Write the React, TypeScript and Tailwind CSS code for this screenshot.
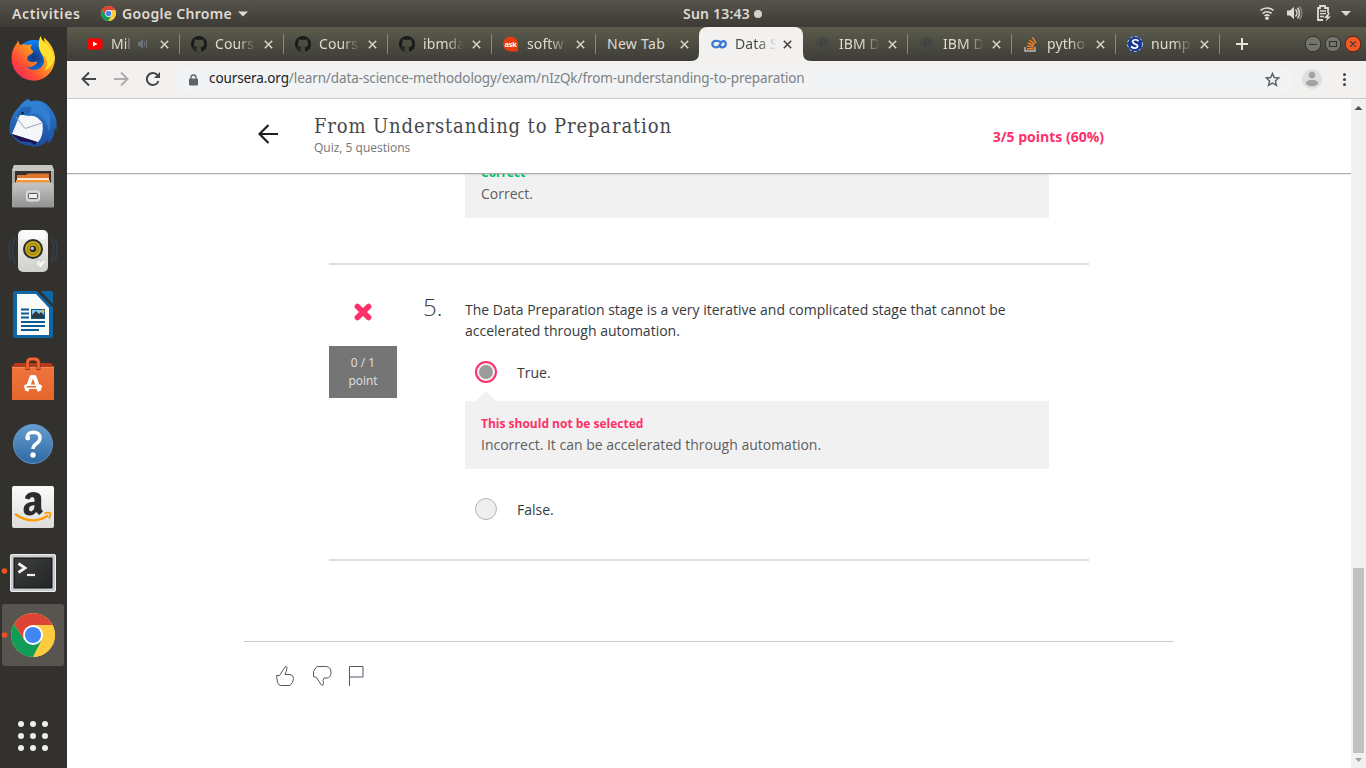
import React from "react";

const UI = "font-['Noto_Sans','Open_Sans',sans-serif]";

function ChromeLogo({ size }: { size: number }) {
  return (
    <svg width={size} height={size} viewBox="0 0 44 44" className="shrink-0">
      <ChromeShape />
    </svg>
  );
}

function ChromeShape() {
  return (
    <g>
      <circle cx="22" cy="22" r="22" fill="#fecb40" />
      <path d="M3 11 A22 22 0 0 0 22 44 L31 27 L22 22 L13.3 27 Z" fill="#109d58" />
      <path d="M22 44 L30.7 27 L32 12 L41.6 12 A22 22 0 0 1 22 44 Z" fill="#fecb40" />
      <path d="M3 11 A22 22 0 0 1 41.4 12 L22 12 L13.3 27 Z" fill="#db4437" />
      <circle cx="22" cy="22" r="10" fill="#fff" />
      <circle cx="22" cy="22" r="8.1" fill="#4285f4" />
    </g>
  );
}

function TopBar() {
  return (
    <div className={`${UI} flex h-[27px] shrink-0 items-center bg-linear-to-b from-[#57534b] to-[#3d3b36] text-[14px] font-semibold text-[#dfdbd2]`}>
      <div className="flex w-[683px] shrink-0 items-center pl-[12px]">
        <span className="w-[89px] whitespace-nowrap tracking-[0.6px]">Activities</span>
        <ChromeLogo size={15} />
        <span className="ml-[6px] w-[111px] whitespace-nowrap tracking-[0.32px]">Google Chrome</span>
        <svg width="10" height="6" viewBox="0 0 10 6" className="ml-[5px]"><path d="M0 .5h10L5 5.5z" fill="#dfdbd2" /></svg>
      </div>
      <div className="flex flex-1 items-center">
        <span className="w-[71px] tracking-[0.2px] whitespace-nowrap">Sun 13:43</span>
        <span className="h-2 w-2 shrink-0 rounded-full bg-[#d4d1ca]" />
      </div>
      <svg width="106" height="27" viewBox="1260 0 106 27" className="shrink-0" fill="none" stroke="#dfdbd2">
        <path d="M1260.5 10.5a9.5 9.5 0 0 1 13 0M1262.5 13.5a6.500 6.500 0 0 1 9 0M1264.5 16a3.600 3.600 0 0 1 5 0" strokeWidth="1.6" />
        <circle cx="1267" cy="18.300" r="1.800" fill="#dfdbd2" stroke="none" />
        <path d="M1287 10.500h3l4-3.700v12.400l-4-3.700h-3z" fill="#dfdbd2" stroke="none" />
        <path d="M1295.500 9.500a5 5 0 0 1 0 7" strokeWidth="1.500" />
        <path d="M1297.500 7.800a8 8 0 0 1 0 10.400" strokeWidth="1.500" />
        <path d="M1299.500 6.500a10 10 0 0 1 0 13" strokeWidth="1.300" opacity=".45" />
        <path d="M1323 20h-5V8h2V6h5v2h3v5" strokeWidth="1.800" />
        <path d="M1320 11h6M1320 13.700h6M1320 16.500h4" strokeWidth="1.300" />
        <path d="M1328.500 13l-4.500 5h3l-1.500 3.500 5.500-5h-3l2-3.500z" fill="#dfdbd2" stroke="none" />
        <path d="M1341 11h10l-5 5z" fill="#dfdbd2" stroke="none" />
      </svg>
    </div>
  );
}

const dockArt: React.ReactNode[] = [
  <g key="firefox">
    <circle cx="34" cy="58" r="18" fill="url(#ffBlue)" />
    <path d="M15.500 45 Q17.500 42.500 18 40.500 L20 45 Q24 43.500 27 45 L32 44.500 Q29 48 32.500 50.500 Q34 51 32 53.500 L28 56 Q26 59 28.500 61 Q31 63 36 61.500 Q38.500 62.500 35 65 Q30 69 25.500 65.500 Q32 73 40.500 68 Q47 62 42 55 Q36 46 40.500 36 Q42 41 45 42 Q43.500 40 44 37.500 Q54 46 55 57 Q55 72 43 78.500 Q33 83.500 22 77.500 Q11 70 11.500 57 Q12 50 15.500 45 Z" fill="url(#ffFire)" />
    <path d="M40.500 36 Q42 41 45 43 Q53 50 54.500 58 Q53 67 44 71 Q51 62 43 55 Q36 47 40.500 36Z" fill="#ffe22d" />
  </g>,
  <g key="mail">
    <path d="M19 107 Q26 97.500 30 99.500 L29 102 Q42 97 51 109 Q58 118 56.500 130 L54.500 128 Q55 137 49 143.500 L47.500 140.500 Q43 146.500 34 146.500 Q17 145.500 11.500 134 L10 135 Q7.500 118 19 107Z" fill="url(#tbBlue)" />
    <path d="M21 105 Q27 99 33 102 Q43 100 49 112 Q52 121 49 133 Q48 123 42 117 Q34 110 28 115 L19 115Z" fill="#2f7fd3" />
    <path d="M20 114.500 L12 134 L38 142 Q44 136 42.500 123 Q36 114 29 116Z" fill="#f5f6fa" />
    <path d="M16 117 L25 128.500 L42 123" fill="none" stroke="#9ca4b0" strokeWidth="1" />
    <path d="M12 134 L37 142 L35 145 Q30 141 26 142 Q17 141 12 134Z" fill="#24124c" />
    <path d="M17 119 Q18 104 31 107 Q33 110 28 115 L20 115Z" fill="#2466b5" />
    <circle cx="22.500" cy="113" r="1.500" fill="#0d274f" />
  </g>,
  <g key="files">
    <path d="M14 165h38l2 5v37H12v-37z" fill="#a9a9a7" />
    <path d="M14 165h38l2 6H12z" fill="#c5c5c3" />
    <path d="M15 171h36v13H15z" fill="#33312f" />
    <path d="M17 175h9l2-1.500h21v9H17z" fill="#e0742c" />
    <path d="M17 178h32v2H17z" fill="#f9e9d3" /><path d="M16 180h34v3H16z" fill="#f1973f" />
    <path d="M14 182.500h38l1.500 3v22h-41v-22z" fill="url(#steel)" />
    <rect x="26.500" y="191" width="13" height="10" rx="2" fill="#ccc" stroke="#e4e4e4" />
    <rect x="28.500" y="193.500" width="9" height="5" rx="1" fill="#eee" stroke="#555" />
  </g>,
  <g key="music">
    <path d="M15 237q-5 13 0 26M11 239q-4 11 0 22M51 237q5 13 0 26M55 239q4 11 0 22" fill="none" stroke="#34506f" strokeWidth="1.500" opacity=".5" />
    <rect x="18" y="230" width="30" height="42" rx="5" fill="url(#speaker)" />
    <path d="M21 231.500q12-3 24 0l1 8H20z" fill="#fff" opacity=".65" />
    <circle cx="33" cy="249" r="10" fill="#292a2b" />
    <circle cx="33" cy="249" r="8" fill="#c8aa18" />
    <circle cx="33" cy="249" r="5.500" fill="none" stroke="#8d7307" />
    <circle cx="33" cy="249" r="3.300" fill="#2e3032" /><circle cx="32.300" cy="248.200" r="1.500" fill="#ccd" />
    <circle cx="39" cy="263.500" r="3.700" fill="#ececea" stroke="#c4c4c4" />
    <path d="M40 267l4-6" stroke="#fff" strokeWidth="1.800" />
  </g>,
  <g key="writer">
    <path d="M15 291h24l14 14v31q0 2-2 2H15q-2 0-2-2v-43q0-2 2-2z" fill="#0f66a4" />
    <path d="M17 294h19l13 14v27H17z" fill="#fbfbfb" />
    <path d="M37 289l18 18" stroke="#33312d" strokeWidth="3.500" />
    <path d="M41 291h10q2 0 2 2v11q-6-6-12-13z" fill="#0f66a4" />
    <path d="M21 309.500h8M21 313.500h8M21 317.500h8M21 322h24M21 326h24M21 330h18" stroke="#0c5a92" strokeWidth="2" />
    <rect x="31.500" y="309.500" width="13" height="9" fill="#87c5e9" stroke="#0c5a92" />
    <path d="M32 318v-3l4-4 3 3 2-2 3 3v3z" fill="#283a43" /><circle cx="43" cy="311" r="1.500" fill="#f4bb2c" />
  </g>,
  <g key="software">
    <path d="M12 366h42v34H12z" fill="url(#bag)" />
    <path d="M15 363h36l3 4H12z" fill="#b73a1a" />
    <path d="M12 367h42v1H12z" fill="#f58b5a" />
    <path d="M27.500 370v-7q0-4 4-4h3q4 0 4 4v7" fill="none" stroke="#9d3012" strokeWidth="4" />
    <path d="M27.500 369v-6q0-4 4-4h3q4 0 4 4v6" fill="none" stroke="#f06a35" strokeWidth="2.600" />
    <path d="M26.500 391l5-14h3l5 14" fill="none" stroke="#fff" strokeWidth="3.800" strokeLinejoin="round" />
    <rect x="24" y="384.500" width="18" height="4.500" rx="2" fill="#fff" />
    <path d="M27 386.800h9" stroke="#ed6c2f" strokeWidth="1.600" />
  </g>,
  <g key="help">
    <circle cx="33" cy="444" r="19.500" fill="url(#helpBlue)" stroke="#5f97c9" strokeWidth="1" />
    <path d="M27.500 439.500q-1.500-7 5.500-7.300 7 0 7 5.800 0 3.500-4 6-3 2-3 5" fill="none" stroke="#fff" strokeWidth="3.400" />
    <circle cx="27.800" cy="438" r="2.400" fill="#fff" />
    <circle cx="33" cy="455" r="2.700" fill="#fff" />
  </g>,
  <g key="store">
    <rect x="12" y="486" width="42" height="42" rx="2" fill="url(#paper)" />
    <path d="M25 498.500q.8-6.500 8.500-6.500 7.700 0 7.700 6.500v9q0 2 1.800 4l-3.800 3.500-3-3q-3 3.500-6.700 3.500-6 0-6-6.200 0-7.300 11-7.600v-2.200q0-2.500-2.200-2.500-2.200 0-2.800 2.500zM34.500 505.300q-5.500 0-5.500 3.700 0 2.500 2.300 2.500 3.200-.8 3.200-6.200z" fill="#2b2b2b" />
    <path d="M15 514q17 12 33 1.500" fill="none" stroke="#f90" strokeWidth="2.300" />
    <path d="M44.500 513.200q4-1 6 0 .3 2-1.500 5.500" fill="none" stroke="#f90" strokeWidth="1.800" />
  </g>,
  <g key="terminal">
    <circle cx="4.500" cy="571" r="2.800" fill="#e95420" />
    <rect x="10" y="554" width="46" height="38" rx="2" fill="#c9ccce" />
    <rect x="10.500" y="554.500" width="45" height="37" rx="2" fill="none" stroke="#eee" />
    <rect x="13.500" y="557.500" width="39" height="31" fill="#1b1c1c" />
    <rect x="15" y="559" width="36" height="28" fill="url(#term)" />
    <path d="M18.500 563.500l6.500 4.500-6.500 4.500" fill="none" stroke="#f2f2f2" strokeWidth="2.800" />
    <path d="M27 575h8" stroke="#f2f2f2" strokeWidth="2.200" />
  </g>,
  <g key="chrome">
    <rect x="2" y="604" width="62" height="62" rx="3" fill="#585550" />
    <circle cx="4.500" cy="635" r="2.800" fill="#e95420" />
    <g transform="translate(11 613)"><ChromeShape /></g>
  </g>,
];

function Dock() {
  return (
    <div className="flex w-[67px] shrink-0 flex-col bg-[#33312d]">
      <svg width="0" height="0" className="absolute">
        <defs>
          <radialGradient id="ffBlue"><stop offset="0" stopColor="#16347e" /><stop offset="1" stopColor="#0a84ff" /></radialGradient>
          <linearGradient id="ffFire" x1="1" y1="0" x2="0" y2="1"><stop offset="0" stopColor="#ffe92e" /><stop offset=".4" stopColor="#ffa020" /><stop offset=".7" stopColor="#ff4b35" /><stop offset="1" stopColor="#e9127d" /></linearGradient>
          <linearGradient id="tbBlue" x1="0" y1="0" x2="0" y2="1"><stop offset="0" stopColor="#2c80d4" /><stop offset="1" stopColor="#1c4c9c" /></linearGradient>
          <linearGradient id="steel" x1="0" y1="0" x2="0" y2="1"><stop offset="0" stopColor="#c6c6c6" /><stop offset="1" stopColor="#929292" /></linearGradient>
          <linearGradient id="speaker" x1="0" y1="0" x2="0" y2="1"><stop offset="0" stopColor="#f4f4f2" /><stop offset="1" stopColor="#cfcfcd" /></linearGradient>
          <linearGradient id="bag" x1="0" y1="0" x2="0" y2="1"><stop offset="0" stopColor="#f0733f" /><stop offset="1" stopColor="#e4682b" /></linearGradient>
          <linearGradient id="helpBlue" x1="0" y1="0" x2="0" y2="1"><stop offset="0" stopColor="#659fd0" /><stop offset="1" stopColor="#2f68a3" /></linearGradient>
          <linearGradient id="paper" x1="0" y1="0" x2="0" y2="1"><stop offset="0" stopColor="#fafafa" /><stop offset="1" stopColor="#dcdcdc" /></linearGradient>
          <linearGradient id="term" x1="0" y1="0" x2="1" y2="1"><stop offset="0" stopColor="#3c3e3e" /><stop offset="1" stopColor="#252626" /></linearGradient>
        </defs>
      </svg>
      {dockArt.map((art, i) => (
        <svg key={i} width="67" height="64" viewBox={`0 ${27 + 64 * i} 67 64`} className="block shrink-0">{art}</svg>
      ))}
      <svg width="67" height="101" viewBox="0 667 67 101" fill="#efeeec" className="block shrink-0">
        {[724, 736, 748].map((y) => [21, 33, 45].map((x) => <circle key={`${x}-${y}`} cx={x} cy={y} r="3" />))}
      </svg>
    </div>
  );
}

const Octocat = (
  <svg width="16" height="16" viewBox="0 0 16 16" fill="#1b1b1b"><path d="M8 0C3.580 0 0 3.580 0 8c0 3.540 2.290 6.530 5.470 7.590.4.070.55-.17.55-.38 0-.19-.01-.82-.01-1.490-2.010.37-2.530-.49-2.690-.94-.09-.23-.48-.94-.82-1.130-.28-.15-.68-.52-.01-.53.63-.01 1.080.58 1.230.82.72 1.210 1.870.87 2.330.66.07-.52.28-.87.51-1.070-1.780-.2-3.640-.89-3.640-3.950 0-.87.31-1.590.82-2.150-.08-.2-.36-1.020.08-2.120 0 0 .67-.21 2.200.82.64-.18 1.320-.27 2-.27s1.360.09 2 .27c1.530-1.040 2.200-.82 2.200-.82.44 1.100.16 1.920.08 2.120.51.56.82 1.270.82 2.150 0 3.070-1.870 3.750-3.650 3.950.29.25.54.73.54 1.480 0 1.070-.01 1.930-.01 2.200 0 .21.15.46.55.38A8.010 8.010 0 0 0 16 8c0-4.420-3.580-8-8-8z" /></svg>
);
const Globe = (
  <svg width="16" height="16" viewBox="0 0 16 16"><circle cx="8" cy="8" r="7" fill="#484846" /><path d="M4 6l4 1-1 4-2-1M9 3l3 2-2 3" fill="#3f3f3b" /></svg>
);

const tabs: { title: string; icon?: React.ReactNode; active?: boolean; sound?: boolean; sep?: boolean }[] = [
  { title: "Mil", sound: true, sep: true, icon: <svg width="16" height="16" viewBox="0 0 16 16"><rect x=".5" y="2.500" width="15" height="11" rx="2.500" fill="#f00" /><path d="M6 5.500v5L10.500 8z" fill="#fff" /></svg> },
  { title: "Cours", icon: Octocat, sep: true },
  { title: "Cours", icon: Octocat, sep: true },
  { title: "ibmda", icon: Octocat, sep: true },
  { title: "softw", sep: true, icon: <svg width="17" height="16" viewBox="0 0 17 16"><path d="M8 0a8 8 0 0 1 8 8v8H8A8 8 0 0 1 8 0z" fill="#e73c0b" /><text x="8" y="10.800" textAnchor="middle" fontSize="8" fontWeight="700" fill="#fff" letterSpacing="-.3" fontFamily="Noto Sans">ask</text></svg> },
  { title: "New Tab" },
  { title: "Data S", active: true, icon: <svg width="16" height="16" viewBox="0 0 16 16" fill="none" stroke="#3c7bd3" strokeWidth="2.300"><path d="M9.800 6.200Q7.500 4.400 4.500 4.900 1.300 5.500 1.300 8q.2 3.300 4 3.300 2 0 3.200-2L10 6.800Q11 5 12.800 5.200q2 .5 2 3-.3 2.800-3 3.100-2 .2-3-1.300" /></svg> },
  { title: "IBM D", icon: Globe, sep: true },
  { title: "IBM D", icon: Globe, sep: true },
  { title: "pytho", sep: true, icon: <svg width="16" height="16" viewBox="0 0 16 16" fill="none"><path d="M2 11v4h10v-4" stroke="#bcbbbb" strokeWidth="1.400" /><path d="M4 12.800h6.500M4 10l6.500 1M4.800 7l6 2.500M6.500 4l5 4.200M9.500 1.500l3.500 5.500" stroke="#f48024" strokeWidth="1.500" /></svg> },
  { title: "nump", sep: true, icon: <svg width="16" height="16" viewBox="0 0 16 16"><circle cx="8" cy="8" r="8" fill="#1a3892" /><circle cx="8" cy="8" r="7.500" fill="none" stroke="#c3d2ee" strokeDasharray="3 2" /><path d="M11.500 5Q9 3 6.500 4.200 4.500 5.500 7 7.500L10 9q1.500 2-1 3-2.500.7-5-1.500" fill="none" stroke="#fff" strokeWidth="1.700" /></svg> },
];

function TabStrip() {
  return (
    <div className={`${UI} flex h-[34px] shrink-0 bg-linear-to-b from-[#5b5b4c] to-[#3e3d38] pl-[9px]`}>
      {tabs.map((t, i) => (
        <div key={i} className={`relative flex h-[34px] w-[104px] shrink-0 items-center text-[14px] ${t.active ? "-ml-px mr-px rounded-t-[8px] bg-[#f2f1f0] pl-[12px] text-[#4c4a46]" : "pl-[11px] text-[#dfdbd2]"}`}>
          {t.active && (
            <>
              <svg width="8" height="8" className="absolute bottom-0 -left-[8px]"><path d="M0 8Q8 8 8 0V8z" fill="#f2f1f0" /></svg>
              <svg width="8" height="8" className="absolute -right-[8px] bottom-0"><path d="M8 8Q0 8 0 0V8z" fill="#f2f1f0" /></svg>
            </>
          )}
          {t.icon && <span className="mr-2 flex w-4 shrink-0">{t.icon}</span>}
          <span className={`pb-[2px] whitespace-nowrap ${t.icon ? (t.sound ? "w-[22px] mask-r-from-65% mask-r-to-95%" : "w-[42px] tracking-[0.1px] mask-r-from-55% mask-r-to-98%") : "w-[64px] tracking-[0.3px]"}`}>{t.title}</span>
          {t.sound && <svg width="11" height="10" viewBox="0 0 11 10" className="ml-[5px]" fill="none" stroke="#6f717b"><path d="M0 3h2l3-3v10L2 7H0z" fill="#6f717b" stroke="none" /><path d="M6.500 2.500v5M8.500 1v8" /></svg>}
          <svg width="9" height="9" viewBox="0 0 9 9" className={`absolute ${t.active ? "right-[11px] stroke-[#45433f]" : "right-[11.5px] stroke-[#d5d1c8]"}`} strokeWidth="1.600"><path d="M.8.8l7.400 7.400M8.200.8L.8 8.200" /></svg>
          {t.sep && <span className="absolute top-[7px] right-0 h-[20px] w-px bg-[#8b8a80]" />}
        </div>
      ))}
      <svg width="146" height="34" viewBox="1220 27 146 34" fill="none">
        <path d="M1236 44h12M1242 38v12" stroke="#e8e4db" strokeWidth="2" />
        {[1313, 1333].map((x) => <circle key={x} cx={x} cy="44" r="7.800" fill="#76756d" stroke="#33322e" />)}
        <circle cx="1353" cy="44" r="7.800" fill="#f1592b" stroke="#5a2413" />
        <path d="M1309 44.500h8M1329.500 41.500h7v5h-7zM1350.300 41.300l5.400 5.400M1355.700 41.300l-5.400 5.400" stroke="#33322e" strokeWidth="1.200" />
      </svg>
    </div>
  );
}

function Toolbar() {
  return (
    <div className={`${UI} flex h-[38px] shrink-0 items-center border-b border-[#c9c9c9] bg-[#f2f1f0]`}>
      <svg width="108" height="37" viewBox="67 61 108 37" fill="none" strokeWidth="2" className="shrink-0">
        <path d="M96 79H83M89 72.500L82.500 79l6.500 6.500" stroke="#46464a" />
        <path d="M114 79h13M121 72.500l6.500 6.500-6.500 6.500" stroke="#aeadac" />
        <path d="M157.700 75.500A6 6 0 1 0 158.500 81" stroke="#46464a" />
        <path d="M160 72v6h-6z" fill="#46464a" />
      </svg>
      <div className="flex h-[28px] w-[1117px] shrink-0 items-center rounded-full bg-[#f1f3f4] pr-[12px] pl-[14px] text-[13.5px]">
        <svg width="9" height="12" viewBox="0 0 9 12"><path d="M2 5V3.500a2.500 2.500 0 0 1 5 0V5" fill="none" stroke="#5f6368" strokeWidth="1.300" /><rect y="4.500" width="9" height="7" rx="1" fill="#5f6368" /></svg>
        <span className="ml-[11px] flex-1 pb-[2px] tracking-[-0.1px] whitespace-nowrap text-[#7d8185]"><span className="text-[#202124]">coursera.org</span>/learn/data-science-methodology/exam/nIzQk/from-understanding-to-preparation</span>
        <svg width="15" height="15" viewBox="0 0 15 15" fill="none" stroke="#5f6368" strokeWidth="1.500"><path d="M7.500 1.500l1.800 4.100 4.400.4-3.300 3 1 4.300-3.900-2.300-3.900 2.300 1-4.300-3.300-3 4.400-.4z" /></svg>
      </div>
      <svg width="74" height="37" viewBox="1292 61 74 37" className="shrink-0">
        <circle cx="1312" cy="79" r="10" fill="#dededd" /><circle cx="1312" cy="75" r="3.300" fill="#a3a3a3" /><ellipse cx="1312" cy="83" rx="6" ry="3.200" fill="#a3a3a3" />
        <g fill="#46464a"><circle cx="1344.500" cy="74.500" r="1.500" /><circle cx="1344.500" cy="79.500" r="1.500" /><circle cx="1344.500" cy="84.500" r="1.500" /></g>
      </svg>
    </div>
  );
}

function QuizPage() {
  return (
    <div className="flex min-w-0 flex-1 flex-col overflow-hidden bg-white font-['Open_Sans','Noto_Sans',sans-serif] text-[14px] leading-[21px] text-[#373a3c]">
      <header className="z-10 flex h-[75px] shrink-0 items-start border-b border-[#adadad] bg-white pl-[191px] shadow-[0_1px_1px_rgba(0,0,0,0.08)]">
        <svg width="20" height="20" viewBox="0 0 20 20" className="mt-[25px] shrink-0" fill="none" stroke="#1f1f1f" strokeWidth="2.200"><path d="M20 10H2M10.500 1L1.500 10l9 9" /></svg>
        <div className="ml-[36px] flex-1 pt-[13px]">
          <h1 className="font-['DejaVu_Serif_Condensed','DejaVu_Serif',serif] text-[20px] leading-[28px] tracking-[0.87px] whitespace-nowrap text-[#45484a]">From Understanding to Preparation</h1>
          <p className="text-[12px] leading-[16px] text-[#757575]">Quiz, 5 questions</p>
        </div>
        <p className="mt-[27px] mr-[247px] text-[14px] font-bold text-[#ff2f6a]">3/5 points (60%)</p>
      </header>
      <div className="mx-[262px] flex w-[760px] flex-col">
        <div className="-mt-[13px] mr-[40px] ml-[136px] h-[57px] bg-[#f1f1f1] px-[16px] text-[#5e5e5e]">
          <p className="pt-px text-[12px] leading-[21px] font-bold text-[#00c26f]">Correct</p>
          <p>Correct.</p>
        </div>
        <section className="mt-[45px] flex h-[298px] border-y-2 border-[#dedede]">
          <div className="flex w-[68px] shrink-0 flex-col items-center">
            <svg width="18" height="18" viewBox="0 0 18 18" className="mt-[38px]" stroke="#ff2f6a" strokeWidth="5.600" strokeLinecap="round" fill="none"><path d="M3.400 3.400l11.200 11.200M14.600 3.400L3.400 14.600" /></svg>
            <div className="mt-[25px] flex h-[52px] w-[68px] flex-col justify-center bg-[#757575] text-center text-[12px] leading-[18px] text-[#e1e1e1]"><span>0 / 1</span><span>point</span></div>
          </div>
          <div className="w-[68px] shrink-0 pt-[24px] pl-[26px] text-[24px] leading-[36px] font-light">5.</div>
          <div className="w-[584px]">
            <p className="mt-[34px] w-[570px]">The Data Preparation stage is a very iterative and complicated stage that cannot be accelerated through automation.</p>
            <div className="mt-[20px] flex h-[22px] items-center pl-[10px]">
              <span className="flex size-[22px] items-center justify-center rounded-full border-2 border-[#ff2f6a] bg-[#f1f1f1]"><span className="size-[14px] rounded-full bg-[#9b9b9b]" /></span>
              <span className="ml-[20px]">True.</span>
            </div>
            <svg width="20" height="10" className="mt-[8px] ml-[11px] block"><path d="M0 10L10 0l10 10z" fill="#f1f1f1" /></svg>
            <div className="h-[68px] bg-[#f1f1f1] px-[16px] pt-[12px] text-[#5e5e5e]">
              <p className="text-[12px] font-bold text-[#ff2f6a]">This should not be selected</p>
              <p>Incorrect. It can be accelerated through automation.</p>
            </div>
            <div className="mt-[29px] flex h-[22px] items-center pl-[10px]">
              <span className="size-[22px] rounded-full border border-[#b4b4b4] bg-[#efefef]" />
              <span className="ml-[20px]">False.</span>
            </div>
          </div>
        </section>
      </div>
      <footer className="mt-[80px] ml-[177px] w-[930px] border-t border-[#cbcbcb] pt-[24px] pl-[31px]">
        <svg width="90" height="21" viewBox="275 666 90 21" fill="none" stroke="#555765">
          <path d="M276.500 675.500h3L285 667q1.500-1.500 2 .5.300 1.500-2 7h5q3.500.3 3.500 4t-3.500 7h-9.500q-2-.5-3-3z" />
          <path d="M313.500 676.500v-5l2-3.500 2-1.500h8.500q5 .5 5 6 0 5-4 5.500h-3l-1 2.500q1 2 0 4.500-1 1.500-2-.5l-4.500-7z" />
          <path d="M349.500 686v-19.500h13.500v10.500h-13.500" />
        </svg>
      </footer>
    </div>
  );
}

export default function App() {
  return (
    <div className="flex h-[768px] w-[1366px] flex-col overflow-hidden">
      <TopBar />
      <div className="flex min-h-0 flex-1">
        <Dock />
        <div className="flex min-w-0 flex-1 flex-col">
          <TabStrip />
          <Toolbar />
          <div className="flex min-h-0 flex-1">
            <QuizPage />
            <div className="flex w-[15px] shrink-0 flex-col items-center justify-between bg-[#f1f1f1]">
              <svg width="15" height="17" viewBox="0 0 15 17"><path d="M3.500 11h8l-4-4z" fill="#505050" /></svg>
              <div className="mt-auto h-[185px] w-[11px] bg-[#c1c1c1]" />
              <svg width="15" height="15" viewBox="0 0 15 15"><path d="M4 5h7l-3.500 4z" fill="#a3a3a3" /></svg>
            </div>
          </div>
        </div>
      </div>
    </div>
  );
}
